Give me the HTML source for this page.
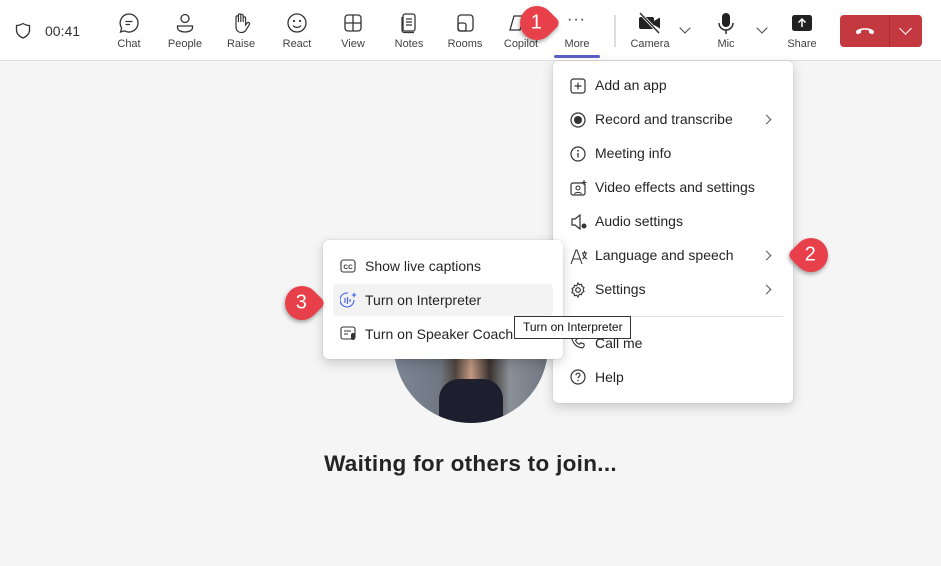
<!DOCTYPE html>
<html><head><style>
*{margin:0;padding:0;box-sizing:border-box}
body{width:941px;height:566px;background:#f5f5f5;font-family:"Segoe UI","Liberation Sans",sans-serif;color:#242424;position:relative;overflow:hidden}
.top{position:absolute;left:0;top:0;width:941px;height:61px;background:#fff;border-bottom:1px solid #e0e0e0}
.b{position:absolute;top:38px;font-size:11px;color:#424242;transform:translateX(-50%);white-space:nowrap}
.ic{position:absolute;top:12px;transform:translateX(-50%)}
.menu{position:absolute;background:#fff;border-radius:6px;box-shadow:0 4px 12px rgba(0,0,0,.18),0 0 2px rgba(0,0,0,.12)}
.it{position:absolute;left:42px;font-size:14px;color:#242424;white-space:nowrap}
.mi{position:absolute;left:17px}
.chev{position:absolute;left:210px;width:7px;height:7px;border-right:1.2px solid #555;border-top:1.2px solid #555;transform:rotate(45deg)}
.badge{position:absolute;width:34px;height:34px;background:#e8404a;color:#fff;font-size:20px;display:flex;align-items:center;justify-content:center;box-shadow:1px 2px 4px rgba(0,0,0,.35)}
</style></head><body>
<div class="top">
<svg style="position:absolute;left:15px;top:22px" width="16" height="18" viewBox="0 0 16 18"><path d="M8 1.5C5.5 3 3.5 3.5 1.5 3.5V8c0 4 3 6.5 6.5 8 3.5-1.5 6.5-4 6.5-8V3.5c-2 0-4-.5-6.5-2z" fill="none" stroke="#333" stroke-width="1.3"/></svg>
<div style="position:absolute;left:45px;top:23px;font-size:14px;color:#333">00:41</div>

<svg class="ic" style="left:129px" width="22" height="22" viewBox="0 0 22 22"><path d="M11 2a9 9 0 1 1-4.5 16.8L2.5 20l1.2-4A9 9 0 0 1 11 2z" fill="none" stroke="#333" stroke-width="1.3"/><path d="M7.5 9.5h7M7.5 12.5h4.5" stroke="#333" stroke-width="1.3"/></svg><div class="b" style="left:129px">Chat</div>
<svg class="ic" style="left:185px" width="22" height="22" viewBox="0 0 22 22"><circle cx="11" cy="6.5" r="4" fill="none" stroke="#333" stroke-width="1.3"/><path d="M3.5 14h15v1.5c0 3-3.5 4.5-7.5 4.5s-7.5-1.5-7.5-4.5z" fill="none" stroke="#333" stroke-width="1.3"/></svg><div class="b" style="left:185px">People</div>
<svg class="ic" style="left:241px" width="22" height="22" viewBox="0 0 22 22"><path d="M6 11V5a1.2 1.2 0 0 1 2.4 0v5V3a1.2 1.2 0 0 1 2.4 0v7V3.5a1.2 1.2 0 0 1 2.4 0V10V6a1.2 1.2 0 0 1 2.4 0v7l1.8-2.2a1.3 1.3 0 0 1 2 1.6L16 18c-1 1.5-2.5 2.5-4.5 2.5C8 20.5 6 18 6 15z" fill="none" stroke="#333" stroke-width="1.2"/></svg><div class="b" style="left:241px">Raise</div>
<svg class="ic" style="left:297px" width="22" height="22" viewBox="0 0 22 22"><circle cx="11" cy="11" r="9" fill="none" stroke="#333" stroke-width="1.3"/><circle cx="8" cy="9" r="1.1" fill="#333"/><circle cx="14" cy="9" r="1.1" fill="#333"/><path d="M7 13.5c2 2.5 6 2.5 8 0" fill="none" stroke="#333" stroke-width="1.3"/></svg><div class="b" style="left:297px">React</div>
<svg class="ic" style="left:353px" width="22" height="22" viewBox="0 0 22 22"><rect x="3" y="3" width="16" height="16" rx="3" fill="none" stroke="#333" stroke-width="1.3"/><path d="M11 3v16M3 11h16" stroke="#333" stroke-width="1.3"/></svg><div class="b" style="left:353px">View</div>
<svg class="ic" style="left:409px" width="22" height="22" viewBox="0 0 22 22"><rect x="5" y="2" width="12" height="17" rx="2" fill="none" stroke="#333" stroke-width="1.3"/><path d="M8 7h6M8 10h6M8 13h6M4 5v13c0 1.5 1 2.5 2.5 2.5H16" fill="none" stroke="#333" stroke-width="1.2"/></svg><div class="b" style="left:409px">Notes</div>
<svg class="ic" style="left:465px" width="22" height="22" viewBox="0 0 22 22"><rect x="4" y="3" width="15" height="16" rx="3" fill="none" stroke="#333" stroke-width="1.3"/><rect x="4" y="11" width="8" height="8" rx="2" fill="none" stroke="#333" stroke-width="1.3"/></svg><div class="b" style="left:465px">Rooms</div>
<svg class="ic" style="left:519px" width="22" height="22" viewBox="0 0 22 22"><path d="M6 4h10l-4 14H2z" fill="none" stroke="#333" stroke-width="1.3"/></svg><div class="b" style="left:521px">Copilot</div>
<div style="position:absolute;left:567px;top:11px;font-size:16px;letter-spacing:1px;color:#333">···</div><div class="b" style="left:577px">More</div>
<div style="position:absolute;left:554px;top:55px;width:46px;height:3px;background:#5b5fc7;border-radius:2px"></div>
<div style="position:absolute;left:614px;top:15px;width:2px;height:32px;background:#ddd"></div>
<svg class="ic" style="left:650px" width="24" height="22" viewBox="0 0 24 22"><rect x="1" y="5" width="15" height="12" rx="2" fill="#222"/><path d="M16 9l6-3.5v11L16 13z" fill="#222"/><path d="M2 1l19 20" stroke="#fff" stroke-width="3"/><path d="M2 1l19 20" stroke="#222" stroke-width="1.3"/></svg><div class="b" style="left:650px">Camera</div>
<div style="position:absolute;left:681px;top:24px;width:8px;height:8px;border-right:1.3px solid #444;border-bottom:1.3px solid #444;transform:rotate(45deg)"></div>
<svg class="ic" style="left:726px" width="22" height="24" viewBox="0 0 22 24"><rect x="7" y="1" width="8" height="14" rx="4" fill="#222"/><path d="M4 11a7 7 0 0 0 14 0M11 18v4" fill="none" stroke="#222" stroke-width="1.4"/></svg><div class="b" style="left:726px">Mic</div>
<div style="position:absolute;left:758px;top:24px;width:8px;height:8px;border-right:1.3px solid #444;border-bottom:1.3px solid #444;transform:rotate(45deg)"></div>
<svg class="ic" style="left:802px;top:14px" width="22" height="18" viewBox="0 0 22 18"><rect x="1" y="1" width="20" height="16" rx="2.5" fill="#222"/><path d="M11 13V5M7.5 8.5L11 5l3.5 3.5" fill="none" stroke="#fff" stroke-width="1.5"/></svg><div class="b" style="left:802px">Share</div>
<div style="position:absolute;left:840px;top:15px;width:82px;height:32px;background:#c4393f;border-radius:4px"></div>
<div style="position:absolute;left:889px;top:15px;width:1px;height:32px;background:#a82f34"></div>
<svg style="position:absolute;left:854px;top:24px" width="22" height="12" viewBox="0 0 22 12"><path d="M2 8c0-5 18-5 18 0l-.5 1.5c-.3.6-1 .8-1.6.5L15 9V6.5c-2.5-1-5.5-1-8 0V9l-2.9 1c-.6.3-1.3.1-1.6-.5z" fill="#fff"/></svg>
<div style="position:absolute;left:901px;top:24px;width:9px;height:9px;border-right:1.4px solid #fff;border-bottom:1.4px solid #fff;transform:rotate(45deg)"></div>
</div>

<!-- avatar -->
<div style="position:absolute;left:394px;top:269px;width:154px;height:154px;border-radius:50%;overflow:hidden;background:#6c6a66">
<div style="position:absolute;left:0;top:0;width:154px;height:154px;background:linear-gradient(90deg,#7d8794 0%,#6f7782 30%,#50463f 40%,#c49a83 50%,#3a3330 62%,#8a9097 75%,#6f7782 100%)"></div>
<div style="position:absolute;left:45px;top:110px;width:64px;height:50px;background:#1d1f2e;border-radius:20px 20px 0 0"></div>
</div>
<div style="position:absolute;left:0;width:941px;top:451px;text-align:center;font-size:22.5px;font-weight:600;color:#242424;letter-spacing:.3px">Waiting for others to join...</div>

<!-- main menu -->
<div class="menu" style="left:553px;top:61px;width:240px;height:342px">
<svg class="mi" style="top:17px" width="16" height="16" viewBox="0 0 16 16"><rect x="1" y="1" width="14" height="14" rx="2.5" fill="none" stroke="#333" stroke-width="1.2"/><path d="M8 4.5v7M4.5 8h7" stroke="#333" stroke-width="1.2"/></svg><div class="it" style="top:16px">Add an app</div>
<svg class="mi" style="top:51px" width="16" height="16" viewBox="0 0 16 16"><circle cx="8" cy="8" r="7" fill="none" stroke="#333" stroke-width="1.2"/><circle cx="8" cy="8" r="4" fill="#333"/></svg><div class="it" style="top:50px">Record and transcribe</div><div class="chev" style="top:55px"></div>
<svg class="mi" style="top:85px" width="16" height="16" viewBox="0 0 16 16"><circle cx="8" cy="8" r="7" fill="none" stroke="#333" stroke-width="1.2"/><path d="M8 7v4.5" stroke="#333" stroke-width="1.3"/><circle cx="8" cy="4.8" r=".9" fill="#333"/></svg><div class="it" style="top:84px">Meeting info</div>
<svg class="mi" style="top:119px" width="18" height="16" viewBox="0 0 18 16"><rect x="1" y="3" width="14" height="12" rx="2" fill="none" stroke="#333" stroke-width="1.2"/><circle cx="8" cy="8" r="2" fill="none" stroke="#333" stroke-width="1.1"/><path d="M4.5 14c.5-2 6.5-2 7 0M14 0v5M11.5 2.5h5" stroke="#333" stroke-width="1.1" fill="none"/></svg><div class="it" style="top:118px">Video effects and settings</div>
<svg class="mi" style="top:153px" width="18" height="16" viewBox="0 0 18 16"><path d="M2 5h3l5-4v14l-5-4H2z" fill="none" stroke="#333" stroke-width="1.2"/><circle cx="14" cy="12" r="2.5" fill="#333"/></svg><div class="it" style="top:152px">Audio settings</div>
<svg class="mi" style="top:187px" width="18" height="17" viewBox="0 0 18 17"><path d="M1 16L6 2h1l5 14M3 11h7M12 5h5M14.5 3v2M13 5c0 3 2 5 4 6M16 5c-.5 3-2 5-3.5 6" fill="none" stroke="#333" stroke-width="1.1"/></svg><div class="it" style="top:186px">Language and speech</div><div class="chev" style="top:191px"></div>
<svg class="mi" style="top:221px" width="16" height="16" viewBox="0 0 16 16"><circle cx="8" cy="8" r="2.3" fill="none" stroke="#333" stroke-width="1.2"/><path d="M8 1l1.3 1.8 2.2-.5.5 2.2 2 1-.9 2 .9 2-2 1-.5 2.2-2.2-.5L8 15l-1.3-1.8-2.2.5-.5-2.2-2-1 .9-2-.9-2 2-1 .5-2.2 2.2.5z" fill="none" stroke="#333" stroke-width="1.1"/></svg><div class="it" style="top:220px">Settings</div><div class="chev" style="top:225px"></div>
<div style="position:absolute;left:14px;top:255px;width:216px;height:1px;background:#e0e0e0"></div>
<svg class="mi" style="top:273px" width="16" height="16" viewBox="0 0 16 16"><path d="M4 1.5l2 .5 1 3-1.5 1.5c.8 1.8 2 3 3.8 3.8L10.8 8.8l3 1 .5 2-1.5 2c-6 0-11-5-11-11z" fill="none" stroke="#333" stroke-width="1.1"/></svg><div class="it" style="top:274px">Call me</div>
<svg class="mi" style="top:308px" width="16" height="16" viewBox="0 0 16 16"><circle cx="8" cy="8" r="7" fill="none" stroke="#333" stroke-width="1.2"/><path d="M6 6.2c0-1.2 1-2 2-2s2 .8 2 1.8c0 1.5-2 1.6-2 3.2" fill="none" stroke="#333" stroke-width="1.2"/><circle cx="8" cy="11.5" r=".8" fill="#333"/></svg><div class="it" style="top:308px">Help</div>
</div>

<!-- submenu -->
<div class="menu" style="left:323px;top:240px;width:240px;height:119px">
<div style="position:absolute;left:10px;top:44px;width:220px;height:32px;background:#f3f3f3;border-radius:4px"></div>
<svg class="mi" style="top:19px" width="16" height="14" viewBox="0 0 16 14"><rect x="1" y="1" width="14" height="12" rx="2.5" fill="none" stroke="#333" stroke-width="1.1"/><text x="3.4" y="10" font-size="6.5" font-family="Liberation Sans" font-weight="bold" fill="#333">CC</text></svg><div class="it" style="top:18px">Show live captions</div>
<svg class="mi" style="top:51px" width="18" height="17" viewBox="0 0 18 17"><path d="M14 9a7 7 0 1 1-6-7" fill="none" stroke="#4f6bed" stroke-width="1.2"/><path d="M5 7v5M7.5 6v7M10 8v3" stroke="#4f6bed" stroke-width="1.2"/><path d="M14 1l.8 2.2L17 4l-2.2.8L14 7l-.8-2.2L11 4l2.2-.8z" fill="#4f6bed"/></svg><div class="it" style="top:52px">Turn on Interpreter</div>
<svg class="mi" style="top:86px" width="18" height="16" viewBox="0 0 18 16"><rect x="1" y="1" width="14" height="12" rx="2" fill="none" stroke="#333" stroke-width="1.1"/><path d="M4 5h7M4 8h4" stroke="#333" stroke-width="1.1"/><rect x="11" y="7" width="4" height="7" rx="2" fill="#333"/></svg><div class="it" style="top:86px">Turn on Speaker Coach</div>
</div>

<!-- tooltip -->
<div style="position:absolute;left:514px;top:316px;width:117px;height:23px;background:#fff;border:1px solid #333;font-size:12px;padding:3px 0 0 8px;color:#111">Turn on Interpreter</div>

<!-- badges -->
<div class="badge" style="left:520px;top:6px;border-radius:50% 6px 50% 50%;transform:rotate(45deg)"><span style="transform:rotate(-45deg)">1</span></div>
<div class="badge" style="left:794px;top:238px;border-radius:50% 50% 50% 6px;transform:rotate(45deg)"><span style="transform:rotate(-45deg)">2</span></div>
<div class="badge" style="left:285px;top:286px;border-radius:50% 6px 50% 50%;transform:rotate(45deg)"><span style="transform:rotate(-45deg)">3</span></div>
</body></html>
